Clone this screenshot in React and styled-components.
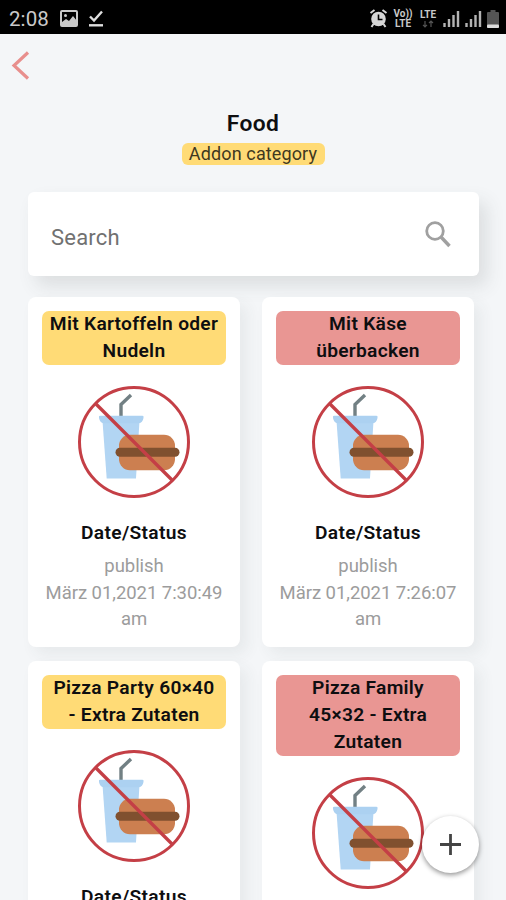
import React from "react";
import styled, { createGlobalStyle } from "styled-components";

const GlobalStyle = createGlobalStyle`
  * { box-sizing: border-box; }
  body { margin: 0; background: #f4f6f8; font-family: Roboto, "Liberation Sans", sans-serif; overflow: hidden; }
`;

const Screen = styled.div`
  position: relative;
  width: 506px;
  height: 900px;
  overflow: hidden;
  background: #f4f6f8;
  color: #0e0e10;
`;

const StatusBar = styled.header`
  display: flex;
  justify-content: space-between;
  align-items: center;
  height: 34px;
  padding: 3px 7px 0 9px;
  background: #000;
  color: #c9c9c9;
`;

const StatusGroup = styled.div`
  display: flex;
  align-items: center;
  gap: ${(p) => p.$gap}px;
`;

const Clock = styled.span`
  width: 40px;
  margin-right: 1px;
  font-size: 20.5px;
  line-height: 30px;
  letter-spacing: 0.1px;
`;

const NetworkLabel = styled.span`
  display: flex;
  flex-direction: column;
  align-items: center;
  width: ${(p) => p.$width}px;
  font-size: 10px;
  font-weight: 700;
  line-height: 10px;
  white-space: nowrap;
`;

const NavBar = styled.nav`
  display: flex;
  height: 75px;
  padding: 17px 0 0 11px;
`;

const BackButton = styled.button`
  display: flex;
  width: 20px;
  height: 29px;
  padding: 0;
  border: 0;
  background: none;
`;

const Heading = styled.div`
  display: flex;
  flex-direction: column;
  align-items: center;
  height: 83px;
`;

const Title = styled.h1`
  margin: 0;
  height: 34px;
  font-size: 22.8px;
  font-weight: 600;
  line-height: 30px;
  letter-spacing: 0.4px;
`;

const Subtitle = styled.span`
  width: 143px;
  height: 22px;
  border-radius: 6px;
  background: #ffdb76;
  color: #40381f;
  font-size: 18px;
  line-height: 21px;
  text-align: center;
  letter-spacing: 0.13px;
  white-space: nowrap;
`;

const SearchBox = styled.div`
  display: flex;
  align-items: center;
  justify-content: space-between;
  width: 451px;
  height: 84px;
  margin: 0 0 21px 28px;
  padding: 0 28px 0 23px;
  border-radius: 6px;
  background: #fff;
  box-shadow: 8px 10px 18px rgba(60, 70, 70, 0.13);
`;

const Placeholder = styled.span`
  padding-top: 6px;
  color: #717171;
  font-size: 22px;
  letter-spacing: 0.2px;
`;

const Grid = styled.main`
  display: grid;
  grid-template-columns: 212px 212px;
  align-items: start;
  gap: 14px 22px;
  padding-left: 28px;
`;

const Card = styled.article`
  display: flex;
  flex-direction: column;
  align-items: center;
  min-height: 350px;
  padding: 14px;
  border-radius: 8px;
  background: #fff;
  text-align: center;
  box-shadow: 7px 7px 15px rgba(60, 70, 70, 0.07);
`;

const Tag = styled.h2`
  width: 184px;
  margin: 0 0 21.6px;
  padding-top: 0.4px;
  border-radius: 7px;
  background: ${(p) => (p.$tone === "red" ? "#e99693" : "#ffdb76")};
  font-size: 19.2px;
  font-weight: 600;
  line-height: 26.7px;
  letter-spacing: 0.28px;
  white-space: nowrap;
`;

const SectionLabel = styled.h3`
  margin: 22px 0 6px;
  font-size: 19.2px;
  font-weight: 600;
  line-height: 26.5px;
  letter-spacing: 0.32px;
`;

const Details = styled.p`
  margin: 0;
  color: #9c9c9c;
  font-size: 18.5px;
  line-height: 26.7px;
  letter-spacing: -0.05px;
  white-space: nowrap;
`;

const AddButton = styled.button`
  position: absolute;
  right: 27px;
  bottom: 27px;
  display: flex;
  align-items: center;
  justify-content: center;
  width: 57px;
  height: 57px;
  padding: 0;
  border: 0;
  border-radius: 50%;
  background: #fff;
  box-shadow: 0 2px 5px rgba(0, 0, 0, 0.42);
`;

function PictureIcon() {
  return (
    <svg width="18" height="17" viewBox="0 0 18 17">
      <rect x="1" y="1" width="16" height="15" rx="1" fill="none" stroke="#c9c9c9" strokeWidth="2" />
      <circle cx="5.5" cy="5.5" r="1.5" fill="#c9c9c9" />
      <path d="M2 15v-3l4-3 3 2 4-5 4 5v4z" fill="#c9c9c9" />
    </svg>
  );
}

function DoneIcon() {
  return (
    <svg width="16" height="17" viewBox="0 0 16 17">
      <path d="M2 6.5l4 4L14 1.5" fill="none" stroke="#dedede" strokeWidth="2.4" />
      <path d="M1 15.3h14" stroke="#dedede" strokeWidth="2.4" />
    </svg>
  );
}

function AlarmIcon() {
  return (
    <svg width="19" height="19" viewBox="0 0 18 19">
      <path d="M1 4l4-3M13 1l4 3M4 15l-2 3M14 15l2 3" stroke="#d6d6d6" strokeWidth="2" />
      <circle cx="9" cy="10" r="7.3" fill="#d6d6d6" />
      <path d="M9 5.5V10.500h4" fill="none" stroke="#000" strokeWidth="1.6" />
    </svg>
  );
}

function SignalIcon() {
  return (
    <svg width="17" height="17" viewBox="0 0 17 17">
      <path d="M1.500 17v-4M6 17V9M10.500 17V5M15 17V1" stroke="#b3b3b3" strokeWidth="2.4" />
    </svg>
  );
}

function BatteryIcon() {
  return (
    <svg width="12" height="18" viewBox="0 0 12 18">
      <path d="M3.500 0h5v2H11q1 0 1 1v14q0 1-1 1H1q-1 0-1-1V3q0-1 1-1h2.500z" fill="#555" />
      <rect y="14.500" width="12" height="3.500" rx="1" fill="#ddd" />
    </svg>
  );
}

function DataArrows() {
  return (
    <svg width="12" height="8" viewBox="0 0 12 8">
      <path d="M3 1v6M1 4.800l2 2 2-2M9 7V1M7 3l2-2 2 2" fill="none" stroke="#555" strokeWidth="1.200" />
    </svg>
  );
}

function NoFoodIcon() {
  return (
    <svg width="112" height="112" viewBox="0 0 112 112">
      <path d="M53 9L43 18.500V30" fill="none" stroke="#728084" strokeWidth="3.400" />
      <path d="M24.500 35h37L58 92.500H28.700z" fill="#b2d5f3" />
      <path d="M22 29.700h42.500q1.500 0 1 2.300-1 5-4.500 5.300H25.500q-3.500-.3-4.500-5.300-.5-2.300 1-2.300z" fill="#acd1f1" />
      <rect x="41" y="48.700" width="56" height="35.500" rx="11" fill="#cc7f50" />
      <rect x="37.500" y="61.700" width="64" height="9" rx="4.500" fill="#80502f" />
      <circle cx="56" cy="56" r="54.500" fill="none" stroke="#c43f46" strokeWidth="3" />
      <path d="M17.500 17.500L94.500 94.500" stroke="#c43f46" strokeWidth="3.300" />
    </svg>
  );
}

const addons = [
  { name: ["Mit Kartoffeln oder", "Nudeln"], tone: "yellow", heading: true, status: "publish", date: "März 01,2021 7:30:49" },
  { name: ["Mit Käse", "überbacken"], tone: "red", heading: true, status: "publish", date: "März 01,2021 7:26:07" },
  { name: ["Pizza Party 60×40", "- Extra Zutaten"], tone: "yellow", heading: true },
  { name: ["Pizza Family", "45×32 - Extra", "Zutaten"], tone: "red" },
];

function AddonCard({ name, tone, heading, status, date }) {
  return (
    <Card>
      <Tag $tone={tone}>
        {name.map((line, i) => (
          <React.Fragment key={line}>
            {i > 0 && <br />}
            {line}
          </React.Fragment>
        ))}
      </Tag>
      <NoFoodIcon />
      {heading && <SectionLabel>Date/Status</SectionLabel>}
      {date && (
        <Details>
          {status}
          <br />
          {date}
          <br />
          am
        </Details>
      )}
    </Card>
  );
}

export default function App() {
  return (
    <Screen>
      <GlobalStyle />
      <StatusBar>
        <StatusGroup $gap={10}>
          <Clock>2:08</Clock>
          <PictureIcon />
          <DoneIcon />
        </StatusGroup>
        <StatusGroup $gap={5}>
          <AlarmIcon />
          <NetworkLabel $width={20}>
            <span>Vo))</span>
            <span>LTE</span>
          </NetworkLabel>
          <NetworkLabel $width={20}>
            <span>LTE</span>
            <DataArrows />
          </NetworkLabel>
          <SignalIcon />
          <SignalIcon />
          <BatteryIcon />
        </StatusGroup>
      </StatusBar>
      <NavBar>
        <BackButton aria-label="Back">
          <svg width="20" height="29" viewBox="0 0 20 29">
            <path d="M17 1.500L3 14.500L17 27.500" fill="none" stroke="#e88f8d" strokeWidth="3.200" />
          </svg>
        </BackButton>
      </NavBar>
      <Heading>
        <Title>Food</Title>
        <Subtitle>Addon category</Subtitle>
      </Heading>
      <SearchBox>
        <Placeholder>Search</Placeholder>
        <svg width="26" height="27" viewBox="0 0 26 27">
          <circle cx="10" cy="10" r="8.300" fill="none" stroke="#a0a0a0" strokeWidth="2.800" />
          <path d="M16 16L24.500 25" stroke="#a0a0a0" strokeWidth="3.400" />
        </svg>
      </SearchBox>
      <Grid>
        {addons.map((a) => (
          <AddonCard key={a.name[0]} {...a} />
        ))}
      </Grid>
      <AddButton aria-label="Add">
        <svg width="21" height="21" viewBox="0 0 21 21">
          <path d="M10.500 0v21M0 10.500h21" stroke="#444" strokeWidth="2.800" />
        </svg>
      </AddButton>
    </Screen>
  );
}
